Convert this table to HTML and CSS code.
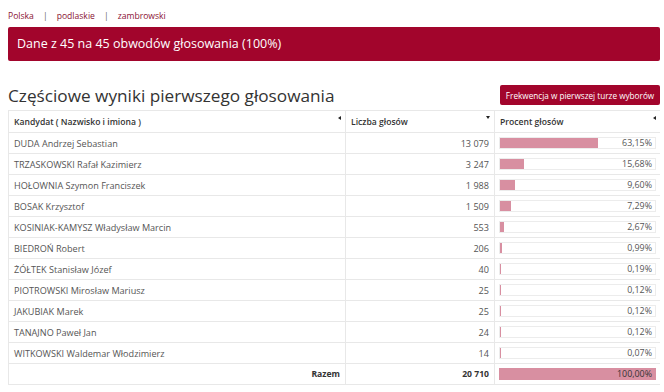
FILE: index.html
```html
<!DOCTYPE html>
<html lang="pl">
<head>
<meta charset="utf-8">
<link rel="stylesheet" href="styles.css">
</head>
<body>
<nav class="crumbs"><span>Polska</span><span class="sep">|</span><span>podlaskie</span><span class="sep">|</span><span>zambrowski</span></nav>
<div class="banner">Dane z 45 na 45 obwodów głosowania (100%)</div>
<div class="head">
  <h1>Częściowe wyniki pierwszego głosowania</h1>
  <button class="btn">Frekwencja w pierwszej turze wyborów</button>
</div>
<table class="results">
  <thead>
    <tr>
      <th class="c1">Kandydat ( Nazwisko i imiona )<span class="sort left"></span></th>
      <th class="c2">Liczba głosów<span class="sort down"></span></th>
      <th class="c3">Procent głosów<span class="sort left"></span></th>
    </tr>
  </thead>
  <tbody>
    <tr><td>DUDA Andrzej Sebastian</td><td class="num">13 079</td><td><div class="bar"><div class="fill" style="width:63.15%"></div><span>63,15%</span></div></td></tr>
    <tr><td>TRZASKOWSKI Rafał Kazimierz</td><td class="num">3 247</td><td><div class="bar"><div class="fill" style="width:15.68%"></div><span>15,68%</span></div></td></tr>
    <tr><td>HOŁOWNIA Szymon Franciszek</td><td class="num">1 988</td><td><div class="bar"><div class="fill" style="width:9.60%"></div><span>9,60%</span></div></td></tr>
    <tr><td>BOSAK Krzysztof</td><td class="num">1 509</td><td><div class="bar"><div class="fill" style="width:7.29%"></div><span>7,29%</span></div></td></tr>
    <tr><td>KOSINIAK-KAMYSZ Władysław Marcin</td><td class="num">553</td><td><div class="bar"><div class="fill" style="width:2.67%"></div><span>2,67%</span></div></td></tr>
    <tr><td>BIEDROŃ Robert</td><td class="num">206</td><td><div class="bar"><div class="fill" style="width:0.99%"></div><span>0,99%</span></div></td></tr>
    <tr><td>ŻÓŁTEK Stanisław Józef</td><td class="num">40</td><td><div class="bar"><div class="fill" style="width:0.19%"></div><span>0,19%</span></div></td></tr>
    <tr><td>PIOTROWSKI Mirosław Mariusz</td><td class="num">25</td><td><div class="bar"><div class="fill" style="width:0.12%"></div><span>0,12%</span></div></td></tr>
    <tr><td>JAKUBIAK Marek</td><td class="num">25</td><td><div class="bar"><div class="fill" style="width:0.12%"></div><span>0,12%</span></div></td></tr>
    <tr><td>TANAJNO Paweł Jan</td><td class="num">24</td><td><div class="bar"><div class="fill" style="width:0.12%"></div><span>0,12%</span></div></td></tr>
    <tr><td>WITKOWSKI Waldemar Włodzimierz</td><td class="num">14</td><td><div class="bar"><div class="fill" style="width:0.07%"></div><span>0,07%</span></div></td></tr>
  </tbody>
  <tfoot>
    <tr><td class="num strong">Razem</td><td class="num strong">20 710</td><td><div class="bar full"><div class="fill" style="width:100%"></div><span>100,00%</span></div></td></tr>
  </tfoot>
</table>
</body>
</html>
```
FILE: styles.css
```css
* { box-sizing: border-box; }
body {
  margin: 8px 4px 8px 8px;
  font-family: "Open Sans", "Noto Sans", sans-serif;
  color: #444;
  background: #fff;
}
.crumbs {
  display: flex;
  gap: 9px;
  font-size: 8.6px;
  line-height: 12px;
  color: #8a1233;
  padding-top: 2px;
  height: 19px;
}
.crumbs .sep { color: #666; }
.banner {
  background: #a2052c;
  color: #fff;
  font-size: 12.5px;
  line-height: 34px;
  height: 34px;
  padding-left: 9px;
  border-radius: 2px;
}
.head {
  display: flex;
  justify-content: space-between;
  align-items: flex-end;
  margin-top: 20px;
  height: 29px;
}
h1 {
  margin: 0 0 1px;
  font-weight: 400;
  font-size: 17.2px;
  line-height: 26px;
  color: #333;
}
.btn {
  align-self: flex-start;
  margin-top: 4px;
  background: #a2052c;
  color: #fff;
  border: 0;
  border-radius: 2px;
  font-family: inherit;
  font-size: 8.2px;
  height: 20px;
  width: 160px;
  padding: 0;
}
.results {
  width: 652px;
  table-layout: fixed;
  border-collapse: collapse;
  font-size: 9.1px;
  color: #555;
}
.results th, .results td {
  border: 1px solid #e8e8e8;
  padding: 0 5px;
  height: 21px;
  vertical-align: middle;
}
.results th {
  position: relative;
  text-align: left;
  font-weight: 600;
  font-size: 8.6px;
  color: #333;
  height: 22px;
}
.results .c1 { width: 337px; }
.results .c2 { width: 149px; }
.results .c3 { width: 166px; }
.sort {
  position: absolute;
  right: 4px;
  top: 5px;
  width: 0;
  height: 0;
}
.sort.left {
  border-top: 2px solid transparent;
  border-bottom: 2px solid transparent;
  border-right: 3px solid #222;
}
.sort.down {
  border-left: 2px solid transparent;
  border-right: 2px solid transparent;
  border-top: 3px solid #222;
}
.num { text-align: right; }
.strong { font-weight: 700; color: #333; font-size: 8.6px; }
.bar {
  position: relative;
  height: 12px;
  border: 1px solid #ececec;
  margin: 0 -1px;
}
.bar .fill {
  height: 100%;
  background: #d88fa1;
}
.bar span {
  position: absolute;
  right: 3px;
  top: 0;
  line-height: 10px;
  font-size: 8.9px;
}
.bar.full { border-color: #d88fa1; }
.bar.full span { color: #333; }
```
